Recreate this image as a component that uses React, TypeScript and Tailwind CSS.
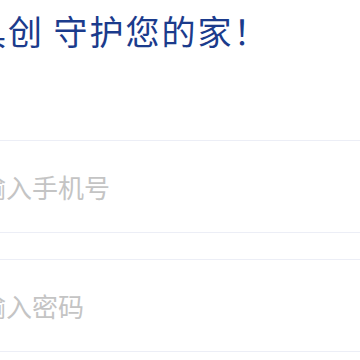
import React from "react";

export default function App() {
  const cjk = { fontFamily: '"Noto Sans CJK SC", "Noto Sans", sans-serif' };
  return (
    <div className="w-[360px] h-[360px] overflow-hidden bg-white" style={cjk}>
      <div className="pt-[11px] ml-[-64px] whitespace-nowrap text-[34px] leading-[40px] tracking-[2px] text-[#1b3b8c]">
        智具创 守护您的家！
      </div>
      <div className="mt-[89px] ml-[-66px] w-[460px]">
        <div className="h-[93px] border-y border-[#eceef6] flex items-center pl-[20px] text-[26px] text-[#c4c4c4]">
          请输入手机号
        </div>
        <div className="mt-[26px] h-[93px] border-y border-[#eceef6] flex items-center pl-[20px] text-[26px] text-[#c4c4c4]">
          请输入密码
        </div>
      </div>
    </div>
  );
}
